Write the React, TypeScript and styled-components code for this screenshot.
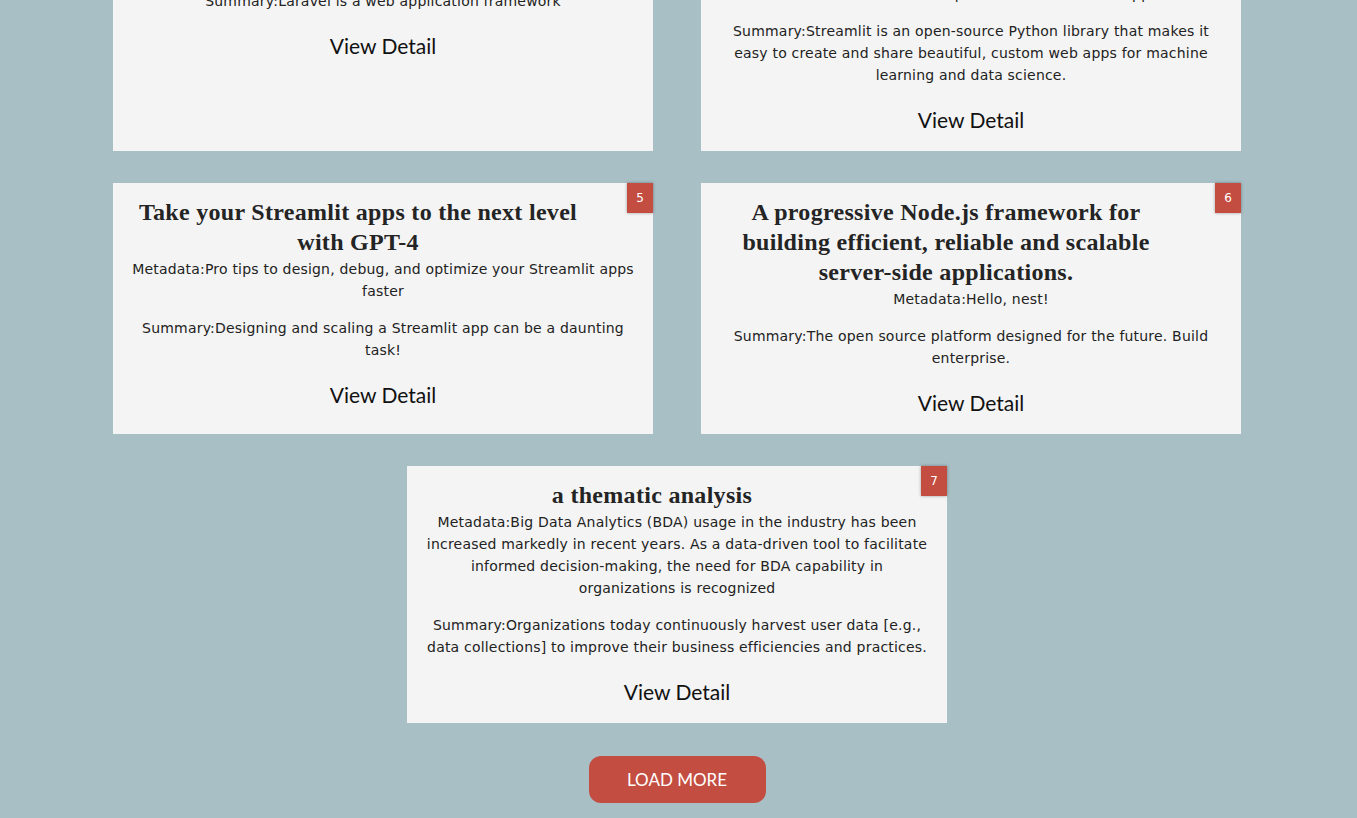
import React from "react";
import styled, { createGlobalStyle } from "styled-components";

const GlobalStyle = createGlobalStyle`
  html, body {
    margin: 0;
    padding: 0;
    background: #a8bfc5;
  }
  body {
    font-family: "DejaVu Sans", Verdana, sans-serif;
    overflow: hidden;
  }
`;

const Page = styled.main`
  min-height: 818px;
  padding-right: 3px;
  background: #a8bfc5;
  display: flex;
  flex-direction: column;
  align-items: center;
`;

const CardList = styled.section`
  margin-top: -92px;
  width: 1128px;
  display: flex;
  flex-wrap: wrap;
  justify-content: center;
  column-gap: 48px;
  row-gap: 32px;
`;

const Card = styled.article`
  position: relative;
  box-sizing: border-box;
  width: 540px;
  padding: 14px 16px 18px;
  background: #f4f4f4;
  text-align: center;
  color: #222;
`;

const Badge = styled.span`
  position: absolute;
  top: 0;
  right: 0;
  width: 26px;
  height: 30px;
  display: flex;
  align-items: center;
  justify-content: center;
  background: #c44d42;
  color: #fff;
  font-family: "DejaVu Sans", Verdana, sans-serif;
  font-size: 12px;
  box-shadow: 0 0 3px rgba(0, 0, 0, 0.35);
`;

const Title = styled.h2`
  margin: 0 50px 1px 0;
  font-family: "Liberation Serif", "Times New Roman", serif;
  font-weight: 700;
  font-size: 24px;
  letter-spacing: 0.3px;
  line-height: 30px;
  color: #242424;
`;

const Text = styled.p<{ $gap: number }>`
  margin: 0 0 ${(p) => p.$gap}px;
  font-size: 14px;
  letter-spacing: 0.2px;
  line-height: 22px;
  color: #222;
`;

const DetailLink = styled.a`
  display: block;
  font-family: Lato, "Open Sans", sans-serif;
  font-size: 21px;
  line-height: 27px;
  color: #111;
  text-decoration: none;
  cursor: pointer;
`;

const LoadMore = styled.button`
  margin: 33px 0 15px;
  width: 177px;
  height: 47px;
  border: none;
  border-radius: 12px;
  background: #c44d42;
  color: #fff;
  font-family: Lato, "Open Sans", sans-serif;
  font-size: 17px;
  cursor: pointer;
`;

type Item = {
  id: number;
  title: string;
  metadata: string;
  summary: string;
};

const items: Item[] = [
  {
    id: 3,
    title: "Laravel - The PHP Framework",
    metadata: "Metadata:The PHP Framework For Web Artisans",
    summary: "Summary:Laravel is a web application framework",
  },
  {
    id: 4,
    title: "Streamlit • A faster way to build and share data apps",
    metadata: "Metadata:Turn data scripts into shareable web apps",
    summary:
      "Summary:Streamlit is an open-source Python library that makes it easy to create and share beautiful, custom web apps for machine learning and data science.",
  },
  {
    id: 5,
    title: "Take your Streamlit apps to the next level with GPT-4",
    metadata:
      "Metadata:Pro tips to design, debug, and optimize your Streamlit apps faster",
    summary:
      "Summary:Designing and scaling a Streamlit app can be a daunting task!",
  },
  {
    id: 6,
    title:
      "A progressive Node.js framework for building efficient, reliable and scalable server-side applications.",
    metadata: "Metadata:Hello, nest!",
    summary:
      "Summary:The open source platform designed for the future. Build enterprise.",
  },
  {
    id: 7,
    title: "a thematic analysis",
    metadata:
      "Metadata:Big Data Analytics (BDA) usage in the industry has been increased markedly in recent years. As a data-driven tool to facilitate informed decision-making, the need for BDA capability in organizations is recognized",
    summary:
      "Summary:Organizations today continuously harvest user data [e.g., data collections] to improve their business efficiencies and practices.",
  },
];

export default function App() {
  return (
    <>
      <GlobalStyle />
      <Page>
        <CardList>
          {items.map((item) => (
            <Card key={item.id}>
              <Badge>{item.id}</Badge>
              <Title>{item.title}</Title>
              <Text $gap={15}>{item.metadata}</Text>
              <Text $gap={20}>{item.summary}</Text>
              <DetailLink>View Detail</DetailLink>
            </Card>
          ))}
        </CardList>
        <LoadMore>LOAD MORE</LoadMore>
      </Page>
    </>
  );
}
